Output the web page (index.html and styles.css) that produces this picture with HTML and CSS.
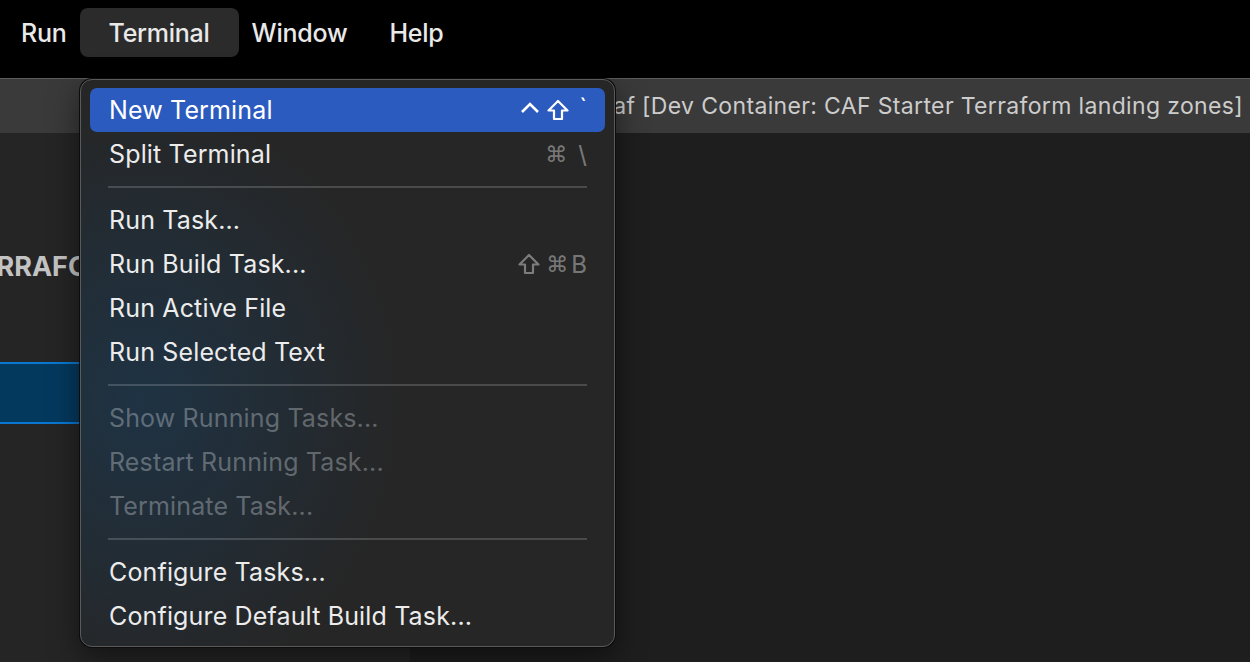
FILE: index.html
```html
<!DOCTYPE html>
<html>
<head>
<meta charset="utf-8">
<link rel="stylesheet" href="styles.css">
</head>
<body>
<div class="screen">
  <div class="menubar">
    <div class="mb-item">Run</div>
    <div class="mb-item active">Terminal</div>
    <div class="mb-item">Window</div>
    <div class="mb-item">Help</div>
  </div>
  <div class="titlebar">
    <span class="title">caf [Dev Container: CAF Starter Terraform landing zones]</span>
  </div>
  <div class="workbench">
    <div class="sidebar">
      <div class="side-header">TERRAFORM</div>
      <div class="side-row"></div>
    </div>
    <div class="editor"></div>
  </div>

  <div class="menu">
    <div class="mi selected">
      <span>New Terminal</span>
      <span class="sc">
        <svg class="k-ctrl" width="20" height="14" viewBox="0 0 20 14"><polyline points="2,12 10,4 18,12" fill="none" stroke="currentColor" stroke-width="2.6" stroke-linejoin="miter"/></svg>
        <svg class="k-shift" width="22" height="22" viewBox="0 0 22 22"><path d="M11 2 L20.5 11.5 H15 V20 H7 V11.5 H1.5 Z" fill="none" stroke="currentColor" stroke-width="2.2" stroke-linejoin="round"/></svg>
        <span class="k-tick">`</span>
      </span>
    </div>
    <div class="mi">
      <span>Split Terminal</span>
      <span class="sc"><span class="k-cmd">⌘</span><span class="k-bs">\</span></span>
    </div>
    <div class="sep"></div>
    <div class="mi"><span>Run Task...</span></div>
    <div class="mi">
      <span>Run Build Task...</span>
      <span class="sc">
        <svg class="k-shift" width="22" height="22" viewBox="0 0 22 22"><path d="M11 2 L20.5 11.5 H15 V20 H7 V11.5 H1.5 Z" fill="none" stroke="currentColor" stroke-width="2.2" stroke-linejoin="round"/></svg>
        <span class="k-cmd">⌘</span><span class="k-b">B</span>
      </span>
    </div>
    <div class="mi"><span>Run Active File</span></div>
    <div class="mi"><span>Run Selected Text</span></div>
    <div class="sep"></div>
    <div class="mi disabled"><span>Show Running Tasks...</span></div>
    <div class="mi disabled"><span>Restart Running Task...</span></div>
    <div class="mi disabled"><span>Terminate Task...</span></div>
    <div class="sep"></div>
    <div class="mi"><span>Configure Tasks...</span></div>
    <div class="mi"><span>Configure Default Build Task...</span></div>
  </div>
</div>
</body>
</html>
```

FILE: styles.css
```css
html, body {
  margin: 0;
  padding: 0;
  background: #1e1e1e;
}

.screen {
  position: relative;
  width: 1250px;
  height: 662px;
  overflow: hidden;
  font-family: Inter, "Noto Sans", sans-serif;
  display: flex;
  flex-direction: column;
}

/* macOS menu bar */
.menubar {
  height: 78px;
  flex: none;
  background: #000;
  display: flex;
  align-items: flex-start;
  padding: 8px 0 0 0;
  box-sizing: border-box;
}

.mb-item {
  height: 49px;
  display: flex;
  align-items: center;
  padding: 0 21px;
  color: #e9e9e9;
  font-size: 25px;
  font-weight: 500;
  letter-spacing: -0.25px;
  border-radius: 8px;
}

.mb-item.active {
  background: #2b2b2b;
  padding: 0 29px;
  margin: 0 -8px;
}

/* window title bar */
.titlebar {
  height: 55px;
  flex: none;
  background: #3a3a3a;
  border-top: 1px solid #5c5c5c;
  box-sizing: border-box;
  display: flex;
  align-items: center;
  justify-content: flex-end;
  padding-right: 7px;
}

.title {
  color: #cccccc;
  font-size: 23px;
  letter-spacing: 0.35px;
  white-space: nowrap;
}

.workbench {
  flex: 1;
  display: flex;
}

.sidebar {
  width: 410px;
  flex: none;
  background: #252526;
  overflow: hidden;
  padding-top: 117px;
  box-sizing: border-box;
}

.side-header {
  margin-left: -38px;
  height: 34px;
  line-height: 34px;
  color: #c3c3c3;
  font-size: 27px;
  font-weight: 700;
  white-space: nowrap;
}

.side-row {
  margin-top: 78px;
  height: 62px;
  box-sizing: border-box;
  background: #04395e;
  border-top: 2px solid #0a78d2;
  border-bottom: 2px solid #0a78d2;
}

.editor {
  flex: 1;
  background: #1e1e1e;
}

/* dropdown menu */
.menu {
  position: absolute;
  left: 80px;
  top: 79px;
  width: 535px;
  height: 568px;
  box-sizing: border-box;
  border: 1px solid #5a5a5a;
  border-radius: 12px;
  box-shadow: 0 0 0 1px #0c0c0c, 0 10px 30px rgba(0,0,0,0.5);
  background:
    radial-gradient(ellipse 260px 300px at 60px 320px, rgba(28, 55, 78, 0.75), rgba(28, 55, 78, 0) 100%),
    #262626;
  padding-top: 8px;
}

.mi {
  height: 44px;
  margin: 0 9px;
  padding: 0 18px 0 19px;
  border-radius: 7px;
  display: flex;
  align-items: center;
  justify-content: space-between;
  color: #ececec;
  font-size: 25px;
  letter-spacing: 0.15px;
  white-space: nowrap;
}

.mi.selected {
  background: #2c5bbf;
  color: #ffffff;
}

.mi.disabled {
  color: rgba(235, 240, 245, 0.33);
}

.sep {
  height: 22px;
  display: flex;
  align-items: center;
  margin: 0 27px 0 27px;
}

.sep::before {
  content: "";
  display: block;
  width: 100%;
  height: 2px;
  background: rgba(255, 255, 255, 0.17);
}

.sc {
  display: flex;
  align-items: center;
  color: rgba(255, 255, 255, 0.4);
  font-size: 24px;
  letter-spacing: 0;
}

.selected .sc {
  color: #ffffff;
}

.k-ctrl {
  margin-right: 7px;
  margin-top: -6px;
}

.k-shift {
  margin-right: 6px;
}

.k-tick {
  width: 12px;
  text-align: right;
  margin-top: -6px;
}

.k-cmd {
  font-family: "DejaVu Sans", sans-serif;
  font-size: 22px;
}

.k-bs {
  margin-left: 11px;
}

.k-b {
  margin-left: 3px;
}
```
